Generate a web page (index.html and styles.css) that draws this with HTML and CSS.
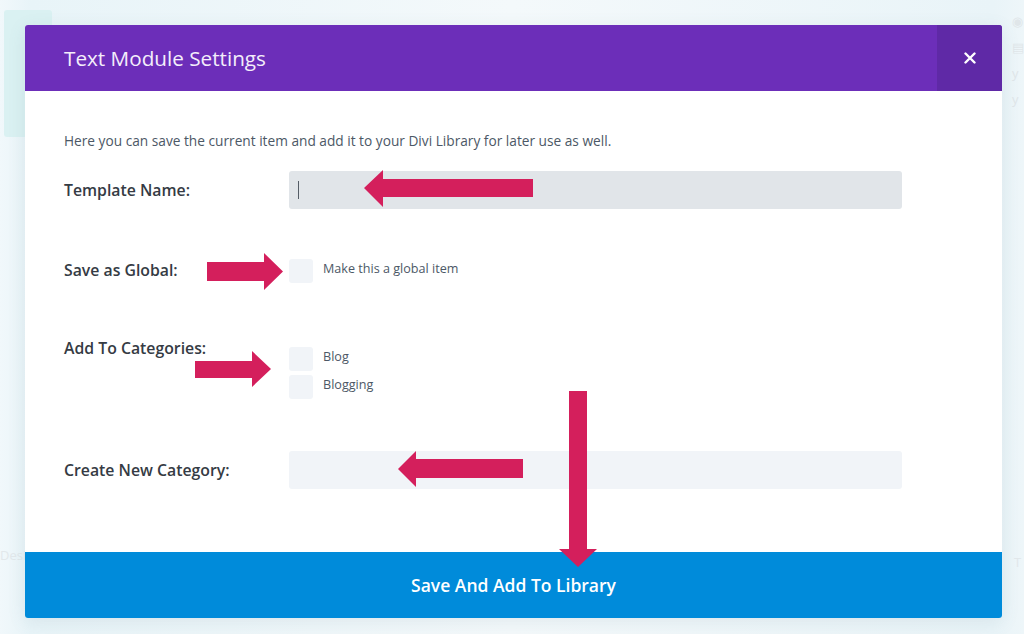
FILE: index.html
```html
<!DOCTYPE html>
<html lang="en">
<head>
<meta charset="utf-8">
<title>Text Module Settings</title>
<link rel="stylesheet" href="styles.css">
</head>
<body>
<div class="page">
  <div class="backdrop">
    <div class="bg-card"></div>
    <div class="bg-text bg-text-left">Desi</div>
    <div class="bg-text bg-text-right">T</div>
    <div class="bg-icons">
      <span class="bg-icon">&#9673;</span>
      <span class="bg-icon">&#9636;</span>
      <span class="bg-icon">y</span>
      <span class="bg-icon">y</span>
    </div>
  </div>

  <div class="modal">
    <header class="modal-header">
      <h1 class="modal-title">Text Module Settings</h1>
      <button class="modal-close" aria-label="Close">
        <svg width="12" height="12" viewBox="0 0 12 12"><path d="M1.5 1.5 L10.5 10.5 M10.5 1.5 L1.5 10.5" stroke="#fff" stroke-width="2.4" stroke-linecap="round"/></svg>
      </button>
    </header>

    <div class="modal-body">
      <p class="intro">Here you can save the current item and add it to your Divi Library for later use as well.</p>

      <div class="row row-template">
        <div class="row-label">Template Name:</div>
        <div class="text-input is-focused"><span class="caret"></span></div>
      </div>

      <div class="row row-global">
        <div class="row-label">Save as Global:</div>
        <div class="check-list">
          <div class="check-item"><span class="checkbox"></span><span class="check-text">Make this a global item</span></div>
        </div>
      </div>

      <div class="row row-cats">
        <div class="row-label row-label-top">Add To Categories:</div>
        <div class="check-list">
          <div class="check-item"><span class="checkbox"></span><span class="check-text">Blog</span></div>
          <div class="check-item"><span class="checkbox"></span><span class="check-text">Blogging</span></div>
        </div>
      </div>

      <div class="row row-new">
        <div class="row-label">Create New Category:</div>
        <div class="text-input"></div>
      </div>
    </div>

    <button class="save-btn">Save And Add To Library</button>
  </div>

  <svg class="annotations" width="1024" height="634" viewBox="0 0 1024 634">
    <g fill="#d41f5c">
      <polygon points="364,188 383,170 383,179 533,179 533,197 383,197 383,207"/>
      <polygon points="207,262 264,262 264,253 283,271.5 264,290 264,281 207,281"/>
      <polygon points="195,361 252,361 252,351 271,369 252,387 252,378 195,378"/>
      <polygon points="398,469 416,451 416,459 523,459 523,478 416,478 416,487"/>
      <polygon points="569,391 587,391 587,549 597,549 578,567 559,549 569,549"/>
    </g>
  </svg>
</div>
</body>
</html>
```

FILE: styles.css
```css
* { box-sizing: border-box; }

html, body {
  margin: 0;
  padding: 0;
}

body {
  width: 1024px;
  height: 634px;
  overflow: hidden;
  font-family: "Open Sans", "Noto Sans", sans-serif;
  background: #edf6f9;
}

.page {
  position: relative;
  width: 1024px;
  height: 634px;
  padding: 25px 22px 16px 25px;
  background: linear-gradient(90deg, #f1f8fb 0%, #e8f4f8 3%, #f4f9fb 50%, #e9f4f8 97%, #eef6f9 100%);
}

/* faint builder UI behind the overlay */
.backdrop {
  position: absolute;
  inset: 0;
  pointer-events: none;
}

.bg-card {
  position: absolute;
  left: 4px;
  top: 10px;
  width: 48px;
  height: 127px;
  border-radius: 3px;
  background: #daf1f2;
}

.bg-text {
  position: absolute;
  font-size: 13px;
  color: #e2e8eb;
}

.bg-text-left { left: 0; top: 546px; }
.bg-text-right { left: 1014px; top: 553px; }

.bg-icons {
  position: absolute;
  left: 1012px;
  top: 12px;
  display: flex;
  flex-direction: column;
  gap: 8px;
  font-size: 13px;
  color: #e0e6e9;
}

.modal {
  position: relative;
  width: 977px;
  height: 593px;
  display: flex;
  flex-direction: column;
  background: #ffffff;
  border-radius: 3px;
  overflow: hidden;
  box-shadow: 0 4px 18px rgba(90, 120, 140, 0.12);
}

.modal-header {
  display: flex;
  align-items: stretch;
  height: 66px;
  flex: none;
  background: #6c2eb9;
}

.modal-title {
  flex: 1;
  margin: 0;
  padding-left: 39px;
  display: flex;
  align-items: center;
  font-size: 20.7px;
  font-weight: 400;
  color: #f4eefb;
}

.modal-close {
  width: 65px;
  border: 0;
  padding: 0;
  margin: 0;
  background: #5f29a6;
  display: flex;
  align-items: center;
  justify-content: center;
  cursor: pointer;
}

.modal-body {
  flex: 1;
  padding: 0 39px;
}

.intro {
  margin: 40px 0 0;
  font-size: 13.7px;
  line-height: 20px;
  color: #4c5866;
}

.row {
  display: flex;
  align-items: center;
}

.row-template { margin-top: 20px; }
.row-global { margin-top: 50px; }
.row-cats { margin-top: 64px; align-items: flex-start; }
.row-new { margin-top: 52px; }

.row-label {
  width: 225px;
  flex: none;
  font-size: 15.8px;
  font-weight: 600;
  line-height: 20px;
  color: #353b44;
}

.row-global .row-label { margin-top: -3px; }
.row-label-top { margin-top: -9px; }

.text-input {
  width: 613px;
  height: 38px;
  border-radius: 3px;
  background: #f1f4f8;
  display: flex;
  align-items: center;
  padding-left: 9px;
}

.text-input.is-focused { background: #e1e5e9; }

.caret {
  display: block;
  width: 1px;
  height: 18px;
  background: #555d66;
}

.check-list {
  display: flex;
  flex-direction: column;
  gap: 4px;
}

.check-item {
  display: flex;
  align-items: center;
  height: 24px;
}

.checkbox {
  width: 24px;
  height: 24px;
  border-radius: 3px;
  background: #f1f4f8;
  flex: none;
}

.check-text {
  margin-left: 10px;
  margin-top: -4px;
  font-size: 12.6px;
  line-height: 16px;
  color: #4c5866;
}

.save-btn {
  flex: none;
  height: 66px;
  width: 100%;
  border: 0;
  margin: 0;
  background: #008bda;
  color: #ffffff;
  font-family: "Open Sans", "Noto Sans", sans-serif;
  font-size: 17.5px;
  font-weight: 600;
  padding-top: 1px;
  cursor: pointer;
}

.annotations {
  position: absolute;
  left: 0;
  top: 0;
  pointer-events: none;
}
```
